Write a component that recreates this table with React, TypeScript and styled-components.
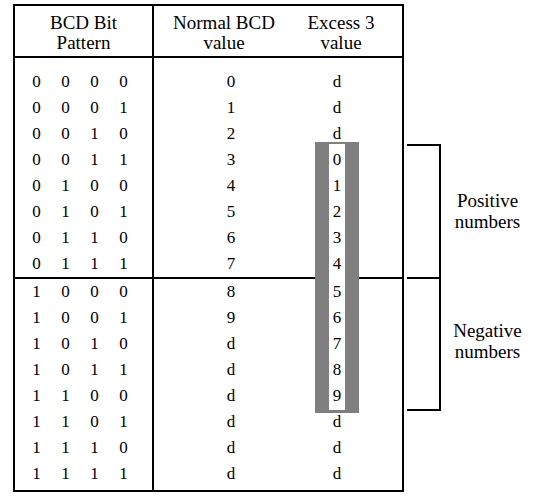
import React from 'react';
import styled, { createGlobalStyle } from 'styled-components';

const GlobalStyle = createGlobalStyle`
  * {
    box-sizing: border-box;
  }
  body {
    margin: 0;
    background: #fff;
    color: #000;
  }
`;

interface Row {
  bits: string[];
  normal: string;
  excess: string;
}

const rows: Row[] = Array.from({ length: 16 }, (_, i) => ({
  bits: i.toString(2).padStart(4, '0').split(''),
  normal: i < 10 ? String(i) : 'd',
  excess: i >= 3 && i <= 12 ? String(i - 3) : 'd',
}));

const App: React.FC = () => {
  const renderSection = (list: Row[], padTop: number, padBottom: number, divider: boolean) => (
    <Section $divider={divider}>
      <BitsCol $padTop={padTop} $padBottom={padBottom}>
        {list.map((r, i) => (
          <BitRow key={i}>
            {r.bits.map((b, j) => (
              <span key={j}>{b}</span>
            ))}
          </BitRow>
        ))}
      </BitsCol>
      <ValueCol $padTop={padTop} $padBottom={padBottom}>
        {list.map((r, i) => (
          <ValueRow key={i}>
            <span>{r.normal}</span>
            <span>{r.excess}</span>
          </ValueRow>
        ))}
      </ValueCol>
    </Section>
  );

  return (
    <>
      <GlobalStyle />
      <Page>
        <Table>
          <HeadRow>
            <BitsHead>
              BCD Bit
              <br />
              Pattern
            </BitsHead>
            <ValueHead>
              <span>
                Normal BCD
                <br />
                value
              </span>
              <span>
                Excess 3
                <br />
                value
              </span>
            </ValueHead>
          </HeadRow>

          {renderSection(rows.slice(0, 8), 11, 0, false)}
          {renderSection(rows.slice(8), 0, 3, true)}

          <Highlight />
        </Table>

        <Side>
          <Group>
            <Bracket $height={133} />
            <Label>
              Positive
              <br />
              numbers
            </Label>
          </Group>
          <Group>
            <Bracket $height={134} $closed />
            <Label $lift={6}>
              Negative
              <br />
              numbers
            </Label>
          </Group>
        </Side>
      </Page>
    </>
  );
};

export default App;

// Styles
const Page = styled.div`
  display: flex;
  align-items: flex-start;
  padding: 4px 0 0 13px;
  font-family: "Liberation Serif", "Times New Roman", serif;
  color: #000;
`;

const Table = styled.div`
  position: relative;
  width: 391px;
  border: 2px solid #000;
`;

const HeadRow = styled.div`
  display: flex;
  height: 52px;
  border-bottom: 2px solid #000;
  font-size: 19px;
  line-height: 20px;
`;

const BitsHead = styled.div`
  width: 139px;
  padding-top: 7px;
  border-right: 2px solid #000;
  text-align: center;
`;

const ValueHead = styled.div`
  flex: 1;
  display: grid;
  grid-template-columns: 130px 90px;
  column-gap: 7px;
  align-content: start;
  padding: 7px 0 0 5px;
  text-align: center;
`;

const Section = styled.div<{ $divider: boolean }>`
  display: flex;
  border-top: ${(p) => (p.$divider ? '2px solid #000' : 'none')};
  font-size: 17px;
  line-height: 26px;
`;

const BitsCol = styled.div<{ $padTop: number; $padBottom: number }>`
  width: 139px;
  padding-top: ${(p) => p.$padTop}px;
  padding-bottom: ${(p) => p.$padBottom}px;
  border-right: 2px solid #000;
`;

const BitRow = styled.div`
  display: grid;
  grid-template-columns: repeat(4, 29px);
  height: 26px;
  padding-left: 7px;
  text-align: center;
`;

const ValueCol = styled.div<{ $padTop: number; $padBottom: number }>`
  position: relative;
  z-index: 2;
  flex: 1;
  padding-top: ${(p) => p.$padTop}px;
  padding-bottom: ${(p) => p.$padBottom}px;
`;

const ValueRow = styled.div`
  display: grid;
  grid-template-columns: 100px 60px;
  column-gap: 26px;
  height: 26px;
  padding-left: 27px;
  text-align: center;
`;

const Highlight = styled.div`
  position: absolute;
  z-index: 1;
  left: 300px;
  top: 136px;
  width: 44px;
  height: 271px;
  background: #fff;
  border-style: solid;
  border-color: #7f7f7f;
  border-width: 2px 14px 3px 14px;
`;

const Side = styled.div`
  display: flex;
  flex-direction: column;
  flex: 1;
  padding-top: 140px;
  margin-left: 3px;
`;

const Group = styled.div`
  display: flex;
`;

const Bracket = styled.div<{ $height: number; $closed?: boolean }>`
  width: 34px;
  height: ${(p) => p.$height}px;
  border-top: 2px solid #000;
  border-right: 2px solid #000;
  border-bottom: ${(p) => (p.$closed ? '2px solid #000' : 'none')};
`;

const Label = styled.div<{ $lift?: number }>`
  flex: 1;
  display: flex;
  align-items: center;
  justify-content: center;
  padding-bottom: ${(p) => p.$lift ?? 0}px;
  font-size: 19px;
  line-height: 21px;
  text-align: center;
`;
